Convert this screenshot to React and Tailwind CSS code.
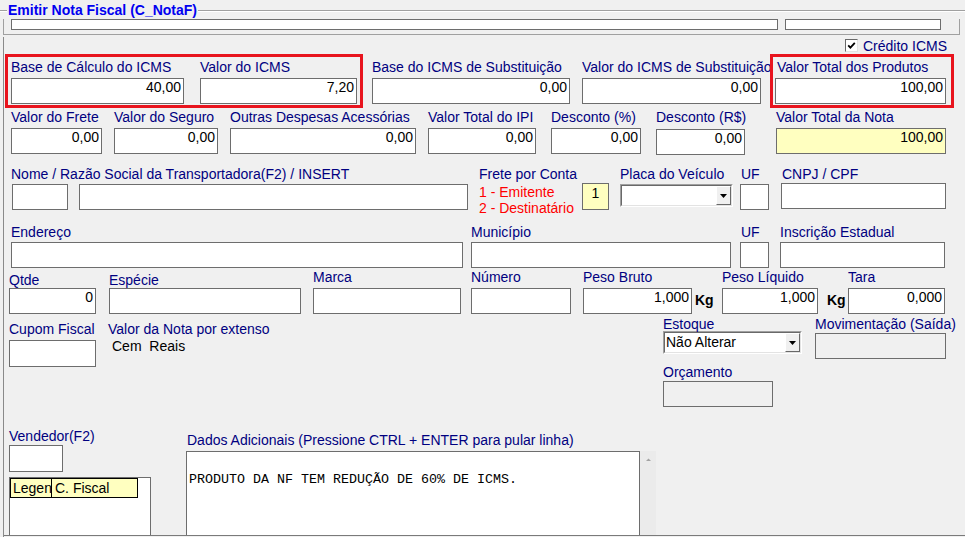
import React from "react";

const RED = "border-[#e8141e]";

function Label({ children, className = "" }) {
  return (
    <div className={`leading-[16px] whitespace-nowrap text-[#000080] ${className}`}>
      {children}
    </div>
  );
}

function Input({ value, className = "", h = "h-[26px]", bg = "bg-white" }) {
  return (
    <div
      className={`${h} ${bg} border border-[#6d6d6d] pr-[2px] text-right leading-[16px] text-black ${className}`}
    >
      {value}
    </div>
  );
}

function Combo({ value, className = "" }) {
  return (
    <div
      className={`h-[23px] border border-t-[#a0a0a0] border-l-[#a0a0a0] border-b-white border-r-white ${className}`}
    >
      <div className="flex h-full border border-t-[#696969] border-l-[#696969] border-b-[#e3e3e3] border-r-[#e3e3e3] bg-white">
        <div className="flex-1 pl-px pt-px leading-[16px] text-black whitespace-nowrap">{value}</div>
        <div className="flex w-[15px] items-center justify-center border border-t-white border-l-white border-b-[#696969] border-r-[#696969] bg-[#f0f0f0]">
          <svg width="7" height="4" viewBox="0 0 7 4">
            <path d="M0 0h7L3.5 4z" fill="#000" />
          </svg>
        </div>
      </div>
    </div>
  );
}

export default function App() {
  return (
    <div className="h-[537px] w-[965px] overflow-hidden bg-[#f0f0f0] font-['Liberation_Sans',Arial,sans-serif] text-[14px] text-black">
      {/* cabeçalho do grupo */}
      <div className="flex h-[19px]">
        <div className="mt-[10px] h-[2px] w-[7px] border-y border-t-[#a0a0a0] border-b-white" />
        <span className="mt-[2px] px-px font-bold leading-[16px] whitespace-nowrap text-[#0000f0]">
          Emitir Nota Fiscal (C_NotaF)
        </span>
        <div className="mt-[10px] h-[2px] flex-1 border-y border-t-[#a0a0a0] border-b-white" />
      </div>

      <div className="ml-[3px] flex h-[16px] w-[957px] border-x border-b border-[#a0a0a0]">
        <div className="ml-[7px] h-[11px] w-[767px] border border-[#6d6d6d] bg-white" />
        <div className="ml-[7px] h-[11px] w-[156px] border border-[#6d6d6d] bg-white" />
      </div>

      <div className="ml-[3px] mt-[2px] h-[500px] border-l border-[#8a8a8a]">
        {/* crédito icms */}
        <div className="flex h-[17px] items-center">
          <div className="ml-[841px] flex h-[13px] w-[13px] items-center justify-center border border-t-[#696969] border-l-[#696969] border-b-[#e3e3e3] border-r-[#e3e3e3] bg-white">
            <svg width="9" height="9" viewBox="0 0 9 9">
              <path d="M1.2 4.3l2.2 2.3L7.8 1.8" stroke="#000" strokeWidth="1.8" fill="none" />
            </svg>
          </div>
          <Label className="ml-[5px]">Crédito ICMS</Label>
        </div>

        {/* linha 1 */}
        <div className="flex h-[54px]">
          <div className={`ml-px flex h-[54px] w-[358px] border-[3px] ${RED}`}>
            <div className="ml-[3px] mt-[2px] w-[173px]">
              <Label>Base de Cálculo do ICMS</Label>
              <Input className="mt-[3px]" value="40,00" />
            </div>
            <div className="ml-[16px] mt-[2px] w-[157px]">
              <Label>Valor do ICMS</Label>
              <Input className="mt-[3px]" value="7,20" />
            </div>
          </div>
          <div className="ml-[9px] mt-[5px] w-[198px]">
            <Label>Base do ICMS de Substituição</Label>
            <Input className="mt-[3px]" value="0,00" />
          </div>
          <div className="ml-[12px] mt-[5px] w-[179px]">
            <Label className="w-[188px] overflow-hidden">Valor do ICMS de Substituição</Label>
            <Input className="mt-[3px]" value="0,00" />
          </div>
          <div className={`ml-[9px] h-[54px] w-[184px] border-[3px] ${RED}`}>
            <div className="ml-[2px] mt-[2px] w-[171px]">
              <Label className="pl-[2px]">Valor Total dos Produtos</Label>
              <Input className="mt-[3px]" value="100,00" />
            </div>
          </div>
        </div>

        {/* linha 2 */}
        <div className="flex h-[48px]">
          <div className="ml-[7px] mt-px w-[91px]">
            <Label>Valor do Frete</Label>
            <Input className="mt-[3px]" value="0,00" />
          </div>
          <div className="ml-[12px] mt-px w-[104px]">
            <Label>Valor do Seguro</Label>
            <Input className="mt-[3px]" value="0,00" />
          </div>
          <div className="ml-[12px] mt-px w-[186px]">
            <Label>Outras Despesas Acessórias</Label>
            <Input className="mt-[3px]" value="0,00" />
          </div>
          <div className="ml-[12px] mt-px w-[108px]">
            <Label>Valor Total do IPI</Label>
            <Input className="mt-[3px]" value="0,00" />
          </div>
          <div className="ml-[15px] mt-px w-[90px]">
            <Label>Desconto (%)</Label>
            <Input className="mt-[3px]" value="0,00" />
          </div>
          <div className="ml-[15px] mt-px w-[89px]">
            <Label>Desconto (R$)</Label>
            <Input className="mt-[4px]" value="0,00" />
          </div>
          <div className="ml-[31px] mt-px w-[170px]">
            <Label>Valor Total da Nota</Label>
            <Input className="mt-[3px]" bg="bg-[#ffffc0]" value="100,00" />
          </div>
        </div>

        {/* linha 3: transportadora */}
        <div className="flex h-[60px]">
          <div className="ml-[7px] mt-[10px] w-[457px]">
            <Label>Nome / Razão Social da Transportadora(F2) / INSERT</Label>
            <div className="mt-[2px] flex">
              <Input className="ml-px w-[56px]" />
              <Input className="ml-[11px] w-[389px]" />
            </div>
          </div>
          <div className="ml-[11px] mt-[10px] w-[103px]">
            <Label>Frete por Conta</Label>
            <div className="mt-[2px] leading-[16px] whitespace-nowrap text-[#ff0000]">1 - Emitente</div>
            <div className="leading-[16px] whitespace-nowrap text-[#ff0000]">2 - Destinatário</div>
          </div>
          <div className="mt-[27px] h-[27px] w-[27px] border border-[#6d6d6d] bg-[#ffffc0] pt-px text-center leading-[16px]">
            1
          </div>
          <div className="ml-[11px] mt-[10px] w-[113px]">
            <Label>Placa do Veículo</Label>
            <Combo className="mt-[2px]" />
          </div>
          <div className="ml-[7px] mt-[10px] w-[29px]">
            <Label className="pl-px">UF</Label>
            <Input className="mt-[2px]" />
          </div>
          <div className="ml-[12px] mt-[10px] w-[165px]">
            <Label className="pl-px">CNPJ / CPF</Label>
            <Input className="mt-px" />
          </div>
        </div>

        {/* linha 4: endereço */}
        <div className="flex h-[52px]">
          <div className="ml-[7px] mt-[8px] w-[452px]">
            <Label>Endereço</Label>
            <Input className="mt-[2px]" />
          </div>
          <div className="ml-[8px] mt-[8px] w-[260px]">
            <Label>Município</Label>
            <Input className="mt-[2px]" />
          </div>
          <div className="ml-[9px] mt-[8px] w-[29px]">
            <Label className="pl-px">UF</Label>
            <Input className="mt-[2px]" />
          </div>
          <div className="ml-[11px] mt-[8px] w-[165px]">
            <Label>Inscrição Estadual</Label>
            <Input className="mt-[2px]" />
          </div>
        </div>

        {/* linha 5: volumes */}
        <div className="flex h-[46px]">
          <div className="ml-[5px] mt-[4px] w-[87px]">
            <Label>Qtde</Label>
            <Input value="0" />
          </div>
          <div className="ml-[13px] mt-[4px] w-[192px]">
            <Label>Espécie</Label>
            <Input />
          </div>
          <div className="ml-[12px] mt-px w-[148px]">
            <Label>Marca</Label>
            <Input className="mt-[3px]" />
          </div>
          <div className="ml-[10px] mt-px w-[100px]">
            <Label>Número</Label>
            <Input className="mt-[3px]" />
          </div>
          <div className="ml-[12px] mt-px w-[109px]">
            <Label>Peso Bruto</Label>
            <Input className="mt-[3px]" value="1,000" />
          </div>
          <div className="ml-[3px] mt-[24px] w-[19px] font-bold leading-[16px]">Kg</div>
          <div className="ml-[8px] mt-px w-[96px]">
            <Label>Peso Líquido</Label>
            <Input className="mt-[3px]" value="1,000" />
          </div>
          <div className="ml-[9px] mt-[24px] w-[19px] font-bold leading-[16px]">Kg</div>
          <div className="ml-[2px] mt-px w-[97px]">
            <Label>Tara</Label>
            <Input className="mt-[3px]" value="0,000" />
          </div>
        </div>

        {/* linha 6 */}
        <div className="flex h-[112px]">
          <div className="ml-[5px] mt-[7px] w-[87px]">
            <Label>Cupom Fiscal</Label>
            <Input className="mt-[3px]" h="h-[27px]" />
          </div>
          <div className="ml-[12px] mt-[7px] w-[555px]">
            <Label>Valor da Nota por extenso</Label>
            <div className="mt-px pl-[4px] leading-[16px] whitespace-pre">Cem  Reais</div>
          </div>
          <div className="mt-[2px] w-[139px]">
            <Label>Estoque</Label>
            <Combo className="-mt-px" value="Não Alterar" />
            <Label className="mt-[10px]">Orçamento</Label>
            <Input className="mt-px w-[110px]" bg="bg-[#f0f0f0]" />
          </div>
          <div className="ml-[13px] mt-[2px] w-[131px]">
            <Label>Movimentação (Saída)</Label>
            <Input className="mt-px" bg="bg-[#f0f0f0]" />
          </div>
        </div>

        {/* linha 7 */}
        <div className="flex h-[109px]">
          <div className="ml-[5px] mt-[2px] w-[142px]">
            <Label>Vendedor(F2)</Label>
            <Input className="mt-px w-[54px]" h="h-[27px]" />
            <div className="mt-[5px] h-[58px] border-x border-t border-[#6d6d6d] bg-white">
              <div className="flex h-[20px] bg-white">
                <div className="w-[42px] overflow-hidden whitespace-nowrap border border-black bg-[#ffffc0] pl-[2px] pt-px leading-[16px]">
                  Legenda
                </div>
                <div className="w-[86px] whitespace-nowrap border-y border-r border-black bg-[#ffffc0] pl-[3px] pt-px leading-[16px]">
                  C. Fiscal
                </div>
              </div>
            </div>
          </div>
          <div className="ml-[35px] mt-[6px] w-[454px]">
            <Label className="pl-px">Dados Adicionais (Pressione CTRL + ENTER para pular linha)</Label>
            <div className="mt-[3px] h-[84px] border-x border-t border-[#6d6d6d] bg-white pl-[2px] pt-[20px] font-['Liberation_Mono','Courier_New',monospace] text-[13.33px] leading-[16px] whitespace-pre">
              PRODUTO DA NF TEM REDUÇÃO DE 60% DE ICMS.
            </div>
          </div>
          <div className="mt-[25px] h-[84px] w-[16px] bg-[#ebebeb]">
            <svg width="16" height="16" viewBox="0 0 16 16">
              <path d="M6 10h5L8.5 7.5z" fill="#a3a3a3" />
            </svg>
          </div>
        </div>
        <div className="h-px bg-[#7a7a7a]" />
      </div>
    </div>
  );
}
